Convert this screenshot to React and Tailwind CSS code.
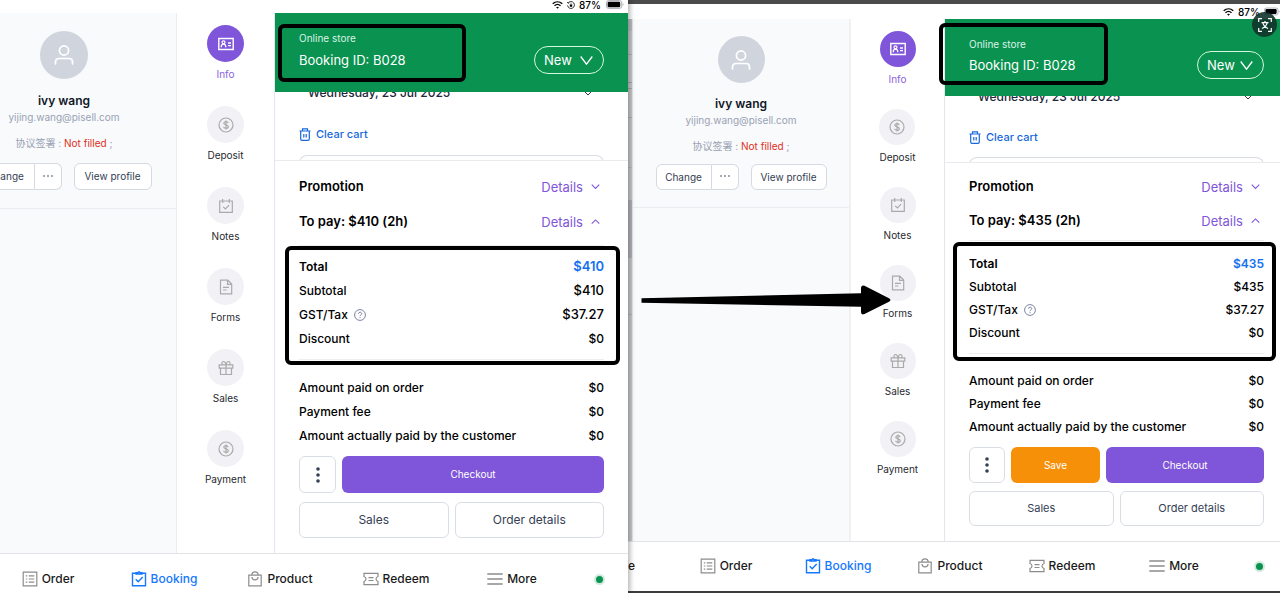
import clsx from "clsx";

const BOOKINGS = {
  before: { total: "$410", canSave: false },
  after: { total: "$435", canSave: true },
};

const SIDE_ITEMS = ["Info", "Deposit", "Notes", "Forms", "Sales", "Payment"];
const TABS = ["Order", "Booking", "Product", "Redeem", "More"];

function DollarIcon() {
  return (
    <svg viewBox="0 0 16 16" className="size-4" fill="none" stroke="currentColor" strokeWidth="1.2">
      <circle cx="8" cy="8" r="7" />
      <path d="M10.2 6.1c-.2-.9-1-1.4-2.2-1.4-1.3 0-2.2.6-2.2 1.6 0 2.3 4.5 1 4.5 3.4 0 1-.9 1.6-2.3 1.6s-2.3-.6-2.4-1.6M8 3.6v8.8" />
    </svg>
  );
}

function SideIcon({ name }) {
  if (name === "Deposit" || name === "Payment") return <DollarIcon />;
  return (
    <svg viewBox="0 0 16 16" className="size-4" fill="none" stroke="currentColor" strokeWidth="1.2">
      {name === "Info" && (
        <>
          <path d="M.8 2.5h14.4v11H.8z" strokeWidth="1.4" />
          <path d="M3.2 11.2c0-2 .8-3 2.3-3s2.3 1 2.3 3M10 7h3M10 9.7h3" strokeWidth="1.3" />
          <circle cx="5.5" cy="6.3" r="1.5" />
        </>
      )}
      {name === "Notes" && <path d="M1.7 3h12.6v11.4H1.7zM4.7 1v4M11.3 1v4M5.2 8.8l2.2 2.2 3.7-3.8" />}
      {name === "Forms" && <path d="M2.5 1.1h7.3l3.9 3.9v9.9H2.5zM9.5 1.1v4.2h4.2M5 8.3h6M5 11h3.5" />}
      {name === "Sales" && (
        <path d="M1.2 4.9h13.6v3.2H1.2zM2.5 8.1h11v6.4h-11zM8 4.9v9.6M8 4.8C7.6 2.6 6.7 1.5 5.5 1.5 3.6 1.5 3.5 4.8 5.2 4.8M8 4.8c.4-2.2 1.3-3.3 2.5-3.3 1.9 0 2 3.3.3 3.3" />
      )}
    </svg>
  );
}

function TabIcon({ name }) {
  return (
    <svg viewBox="0 0 16 16" className="size-4 shrink-0" fill="none" stroke="currentColor" strokeWidth="1.2">
      {name === "Order" && <path d="M1.2 1.2h13.6v13.6H1.2zM3.8 4.8h1.5M3.8 8h1.5M3.8 11.2h1.5M6.8 4.8h5.5M6.8 8h5.5M6.8 11.2h5.5" />}
      {name === "Booking" && <path d="M4.5 2.2H1.5v12.6h13V2.2h-3M5 3V1.7h1.7L8 .7l1.3 1H11V3zM4.7 8.3l2.5 2.5 4.5-4.8" strokeWidth="1.4" />}
      {name === "Product" && <path d="M1.8 4.2h12.4v10.6H1.8zM4.8 4.2c0-4.5 6.4-4.5 6.4 0M4.9 6c.2 3.8 6 3.8 6.2 0" />}
      {name === "Redeem" && <path d="M1 2.3h14v3.2c-1.6.6-2 1.5-2 2.5s.4 1.9 2 2.5v3.2H1v-3.2c1.6-.6 2-1.5 2-2.5s-.4-1.9-2-2.5zM5.5 6.7h5M5.5 9.5h5" />}
      {name === "More" && <path d="M.3 3h15.4M.3 8h15.4M.3 13h15.4" strokeWidth="1.3" />}
    </svg>
  );
}

function Chevron({ up, className }) {
  return (
    <svg viewBox="0 0 10 6" className={className} fill="none" stroke="currentColor" strokeWidth="1.2">
      <path d={up ? "M.8 5.2 5 1l4.2 4.2" : "M.8.8 5 5 9.2.8"} />
    </svg>
  );
}

function StatusBar({ compact }) {
  return (
    <div
      className={clsx(
        "flex items-start justify-end gap-1 bg-white text-[10px] leading-[10px] font-medium text-black",
        compact ? "h-[15px] pt-[3px]" : "h-[13px] pr-[3px]"
      )}
    >
      <svg viewBox="0 0 12 9" className="mt-[1px] h-2 w-[11px]" fill="none" stroke="currentColor" strokeWidth="1.5">
        <path d="M.6 3.2c3.2-2.9 7.6-2.9 10.800 0M2.600 5.300c2-1.800 4.800-1.800 6.800 0" />
        <path d="M4.4 7.1c.9-.8 2.3-.8 3.2 0L6 8.8z" fill="currentColor" stroke="none" />
      </svg>
      {!compact && (
        <svg viewBox="0 0 10 10" className="mt-[1px] size-2" fill="none" stroke="currentColor">
          <path d="M1.5 2.5A4.3 4.3 0 1 1 .7 5.5M0 1.5l1.6 1.3L3 1.5" />
          <path d="M3.5 4.6h3v2.6h-3z" fill="currentColor" stroke="none" />
          <path d="M4 4.6c0-1.7 2-1.7 2 0" strokeWidth=".7" />
        </svg>
      )}
      <span>87%</span>
      <svg viewBox="0 0 20 10" className={clsx("h-[9px] shrink-0", compact ? "w-4" : "w-5")}>
        <rect x=".5" y=".7" width="17" height="8.6" rx="2.4" fill="none" stroke="#9ca3af" />
        <rect x="1.8" y="2" width="14" height="6" rx="1.3" />
        <path d="M18.6 3.6v2.8c1.2-.5 1.2-2.3 0-2.8" fill="#9ca3af" />
      </svg>
    </div>
  );
}

function Profile({ compact }) {
  const button = clsx(
    "border border-[#d5d9e2] bg-white text-[10px] text-[#344054]",
    compact ? "h-[26px]" : "h-[27px]"
  );
  return (
    <aside
      className={clsx(
        "flex shrink-0 justify-end overflow-hidden bg-[#f9fafc]",
        compact ? "w-[218px] border-r-2 border-[#f0f1f4]" : "w-[177px] border-r border-[#eaecf0]"
      )}
    >
      <div className={clsx("flex shrink-0 flex-col items-center", compact ? "w-[216px]" : "w-56")}>
        <div
          className={clsx(
            "flex items-center justify-center rounded-full bg-[#d0d5dd] text-white",
            compact ? "mt-[17px] size-[47px]" : "mt-[18px] size-12"
          )}
        >
          <svg viewBox="0 0 20 20" className="size-5" fill="none" stroke="currentColor" strokeWidth="1.7" strokeLinecap="round">
            <circle cx="10" cy="5.5" r="4.6" />
            <path d="M1.5 19v-2c0-2.2 1.4-3.5 3.5-3.5h10c2.1 0 3.5 1.3 3.5 3.500v2" />
          </svg>
        </div>
        <h2 className={clsx("text-[12px] leading-4 font-semibold text-[#101828]", compact ? "mt-[13px]" : "mt-[14px]")}>ivy wang</h2>
        <p className="text-[10px] leading-4 text-[#98a2b3]">yijing.wang@pisell.com</p>
        <p className="mt-[10px] text-[10px] leading-4 text-[#98a2b3]">
          协议签署 : <span className="text-[#e02d21]">Not filled</span> ;
        </p>
        <div className={clsx("flex w-full justify-center gap-3 border-b border-[#eaecf0]", compact ? "mt-[10px] pb-[17px]" : "mt-3 pb-[18px]")}>
          <div className="flex">
            <button className={clsx(button, "rounded-l-md", compact ? "w-14" : "w-[58px]")}>Change</button>
            <button className={clsx(button, "flex w-[27px] items-center justify-center rounded-r-md border-l-0")} aria-label="More actions">
              <svg viewBox="0 0 10 2" className="mb-[2px] w-[10px]" fill="currentColor">
                <circle cx="1" cy="1" r=".8" />
                <circle cx="5" cy="1" r=".8" />
                <circle cx="9" cy="1" r=".8" />
              </svg>
            </button>
          </div>
          <button className={clsx(button, "rounded-md", compact ? "w-[76px]" : "w-[78px]")}>View profile</button>
        </div>
      </div>
    </aside>
  );
}

function SideNav({ compact }) {
  return (
    <nav
      className={clsx(
        "flex shrink-0 flex-col items-center border-r border-[#e4e5ee] bg-white pt-3",
        compact ? "w-[94px] gap-[22px]" : "w-[98px] gap-6"
      )}
    >
      {SIDE_ITEMS.map((name) => (
        <button key={name} className="flex flex-col items-center gap-1">
          <span
            className={clsx(
              "flex items-center justify-center rounded-full",
              compact ? "size-9" : "size-[37px]",
              name === "Info" ? "bg-[#7f56d9] text-white" : "bg-[#f2f1f6] text-[#aaaaaa]"
            )}
          >
            <SideIcon name={name} />
          </span>
          <span className={clsx("text-[10px] leading-4", name === "Info" ? "text-[#8b63e0]" : "text-[#1f2a30]")}>{name}</span>
        </button>
      ))}
    </nav>
  );
}

function SummaryRow({ label, value, compact, bold, help }) {
  return (
    <div className={clsx("flex items-center justify-between text-[12px] text-black", compact ? "h-[23px]" : "h-6", bold ? "font-semibold" : "font-medium")}>
      <dt className="flex items-center gap-[6px]">
        {label}
        {help && (
          <svg viewBox="0 0 12 12" className="size-3 text-[#7c86a3]" fill="none" stroke="currentColor">
            <circle cx="6" cy="6" r="5.4" />
            <path d="M4.4 4.8c0-2.1 3.3-2 3.3-.1C7.7 5.9 6 5.9 6 7.2M6 8.2v1" />
          </svg>
        )}
      </dt>
      <dd className={clsx(!compact && value !== "$0" && "text-[13px]", bold && "text-[#1570ef]")}>{value}</dd>
    </div>
  );
}

function SectionHeader({ title, open, className }) {
  return (
    <div className={clsx("flex h-5 items-center justify-between", className)}>
      <h3 className="text-[13px] font-semibold text-black">{title}</h3>
      <button className="flex items-center gap-2 pr-1 text-[13px] leading-5 text-[#7f56d9]">
        Details
        <Chevron up={open} className="w-[9px]" />
      </button>
    </div>
  );
}

function BookingPanel({ booking, compact }) {
  const gutter = compact ? "pl-6 pr-4" : "px-6";
  const outline = "rounded-md border border-[#d9dde5] bg-white text-[#344054]";
  return (
    <main className="min-w-0 flex-1 bg-white">
      <header className={clsx("relative flex items-end justify-between bg-[#099250] pt-[17px] text-white", gutter, compact ? "pb-[17px]" : "pb-[18px]")}>
        <div className={clsx("flex flex-col pb-1", compact ? "gap-[3px]" : "gap-1")}>
          <p className="text-[10px] leading-4 text-[#dcf3e7]">Online store</p>
          <h1 className="text-[13px] leading-5">Booking ID: B028</h1>
        </div>
        <label className={clsx("flex h-7 items-center justify-between rounded-full border border-[#d3f8df] pr-[10px] pl-[9px]", compact ? "w-[67px]" : "w-[70px]")}>
          <select className="appearance-none bg-transparent text-[13px] leading-5" aria-label="Booking status">
            <option>New</option>
          </select>
          <svg viewBox="0 0 13 9" className="w-[13px]" fill="none" stroke="currentColor" strokeWidth="1.3">
            <path d="M.7.5 6.5 8.2 12.3.5" />
          </svg>
        </label>
        <div
          className={clsx(
            "absolute rounded-md border-4 border-black",
            compact ? "top-1 -left-[6px] h-[62px] w-[169px]" : "top-[11px] left-[3px] h-[58px] w-[188px]"
          )}
        />
      </header>

      <div className={clsx("overflow-hidden", gutter, compact ? "h-[66px]" : "h-[68px]")}>
        <button className="-mt-[9px] flex h-5 w-full items-center justify-between pr-3 pl-[9px] text-[12px] font-medium text-[#1d2939]">
          Wednesday, 23 Jul 2025
          <Chevron className="w-2" />
        </button>
        <button className={clsx("flex h-5 items-center gap-[5px] text-[11px] font-medium text-[#1868db]", compact ? "mt-5" : "mt-[21px]")}>
          <svg viewBox="0 0 12 13" className="h-[13px] w-3" fill="none" stroke="currentColor" strokeWidth="1.2">
            <path d="M.5 3h11M3.5 3V.8h5V3M1.700 3v8c0 .8.5 1.3 1.3 1.3h6c.8 0 1.3-.5 1.3-1.3V3M4.800 6v3.600M7.200 6v3.600" />
          </svg>
          Clear cart
        </button>
        <div className={clsx("h-2 rounded-t-lg border border-b-0 border-[#d9dde5]", compact ? "mt-[10px]" : "mt-[11px]")} />
      </div>

      <section className={clsx("border-t border-[#e9eaee] pb-[15px]", gutter, compact ? "pt-[14px]" : "pt-4")}>
        <SectionHeader title="Promotion" />
        <SectionHeader title={`To pay: ${booking.total} (2h)`} open className={compact ? "mt-[14px]" : "mt-[15px]"} />

        <dl className={clsx("relative border-y border-[#eceef1]", compact ? "mt-[9px] pt-[11px] pb-[9px]" : "mt-[13px] pt-[9px] pb-2")}>
          <SummaryRow label="Total" value={booking.total} compact={compact} bold />
          <SummaryRow label="Subtotal" value={booking.total} compact={compact} />
          <SummaryRow label="GST/Tax" value="$37.27" compact={compact} help />
          <SummaryRow label="Discount" value="$0" compact={compact} />
          <div
            className={clsx(
              "absolute rounded-md border-4 border-black",
              compact ? "top-[1px] -right-3 -bottom-2 -left-4" : "top-0 -right-4 -bottom-[6px] -left-[14px]"
            )}
          />
        </dl>

        <dl className={compact ? "mt-[15px]" : "mt-4"}>
          <SummaryRow label="Amount paid on order" value="$0" compact={compact} />
          <SummaryRow label="Payment fee" value="$0" compact={compact} />
          <SummaryRow label="Amount actually paid by the customer" value="$0" compact={compact} />
        </dl>

        <div className={clsx("flex gap-[6px] text-[10px] text-white", compact ? "mt-[9px] h-9" : "mt-2 h-[37px]")}>
          <button className={clsx(outline, "flex shrink-0 items-center justify-center", compact ? "w-9" : "w-[37px]")} aria-label="More options">
            <svg viewBox="0 0 4 16" className="h-4 w-1" fill="currentColor">
              <circle cx="2" cy="2" r="1.8" />
              <circle cx="2" cy="8" r="1.8" />
              <circle cx="2" cy="14" r="1.8" />
            </svg>
          </button>
          {booking.canSave && <button className="w-[89px] shrink-0 rounded-md bg-[#f79009]">Save</button>}
          <button className="flex-1 rounded-md bg-[#7f56d9]">Checkout</button>
        </div>
        <div className={clsx("grid grid-cols-2 gap-[6px]", compact ? "mt-2 h-[35px] text-[11px]" : "mt-[9px] h-9 text-[12px]")}>
          <button className={outline}>Sales</button>
          <button className={outline}>Order details</button>
        </div>
      </section>
    </main>
  );
}

function TabBar({ compact }) {
  return (
    <nav className={clsx("flex justify-end overflow-hidden border-t border-[#e1e3e6] bg-white text-[12px] leading-5 font-medium text-[#1a1a1a]", compact ? "pt-[14px] pb-[15px]" : "pt-[15px] pb-1")}>
      {compact && <a href="#home" className="mr-[35px] shrink-0">Home</a>}
      {TABS.map((name) => (
        <a
          key={name}
          href={`#${name.toLowerCase()}`}
          className={clsx("flex shrink-0 items-center justify-center gap-1", compact ? "w-28" : "w-[116px]", name === "Booking" && "text-[#1677ff]")}
        >
          <span className={clsx("flex", name !== "Booking" && "text-[#8c8c8c]")}>
            <TabIcon name={name} />
          </span>
          {name}
        </a>
      ))}
      <div className={clsx("flex shrink-0 items-center justify-center", compact ? "ml-2 w-[42px]" : "w-[58px]")}>
        <span className="size-[11px] rounded-full border-2 border-[#d1eadd] bg-[#099250]" />
      </div>
    </nav>
  );
}

// Sliver of the page behind, still visible next to the front screen
function BackdropEdge() {
  return (
    <div className="flex w-[5px] shrink-0 flex-col border-r border-[#e4e6e8] bg-[#c9cacc]">
      <div className="h-3 bg-[#bcbec2]" />
      <div className="h-6 border-b border-[#aeb0b3]" />
      <div className="h-7 border-b border-[#a5a7aa]" />
      <div className="h-[6px] border-b border-[#a5a7aa]" />
      <div className="h-[29px] border-b border-[#aeb0b3]" />
      <div className="h-[50px] border-b border-[#b9babd]" />
      <div className="h-8" />
      <div className="h-[58px] bg-[#b3b3ba]" />
      <div className="h-[57px] border-b border-[#b6b6b6]" />
    </div>
  );
}

function TranslateBadge() {
  return (
    <button className="absolute top-2 right-[3px] flex size-[25px] items-center justify-center rounded-full bg-[#12342a]/90 text-white" aria-label="Translate">
      <svg viewBox="0 0 14 14" className="size-[14px]" fill="none" stroke="currentColor" strokeWidth="1.2">
        <path d="M.7 4V.7H4M10 .7h3.3V4M13.3 10v3.3H10M4 13.3H.7V10" />
        <path d="M3.5 4.700h7M7 3v1.700M9.200 4.900c-.8 2.700-2.700 4.600-5.300 5.600M4.800 4.900c.8 2.700 2.700 4.600 5.300 5.600" />
      </svg>
    </button>
  );
}

function Arrow() {
  return (
    <svg viewBox="0 0 250 30" className="absolute top-[281px] left-[13px] h-[30px] w-[250px]">
      <path d="M.5 13.3 220 8.3V3q0-3.500 3.500-2.300l24 12.300q4 2 0 4l-24 12q-3.500 1.500-3.500-2v-5.300L.5 17.700z" />
    </svg>
  );
}

export default function App() {
  return (
    <div className="grid min-h-screen grid-cols-[628fr_652fr] items-start overflow-hidden bg-white font-['Inter','Noto_Sans_CJK_SC',sans-serif]">
      <div className="relative z-10 min-w-0 bg-white shadow-[2px_0_5px_rgba(0,0,0,0.3)]">
        <StatusBar />
        <div className="flex">
          <Profile />
          <SideNav />
          <BookingPanel booking={BOOKINGS.before} />
        </div>
        <TabBar />
      </div>

      <div className="relative min-w-0 border-t-4 border-b-2 border-t-[#4b4b4b] border-b-[#3c3c3c]">
        <StatusBar compact />
        <div className="flex">
          <BackdropEdge />
          <Profile compact />
          <SideNav compact />
          <BookingPanel booking={BOOKINGS.after} compact />
        </div>
        <TabBar compact />
        <TranslateBadge />
        <Arrow />
      </div>
    </div>
  );
}
